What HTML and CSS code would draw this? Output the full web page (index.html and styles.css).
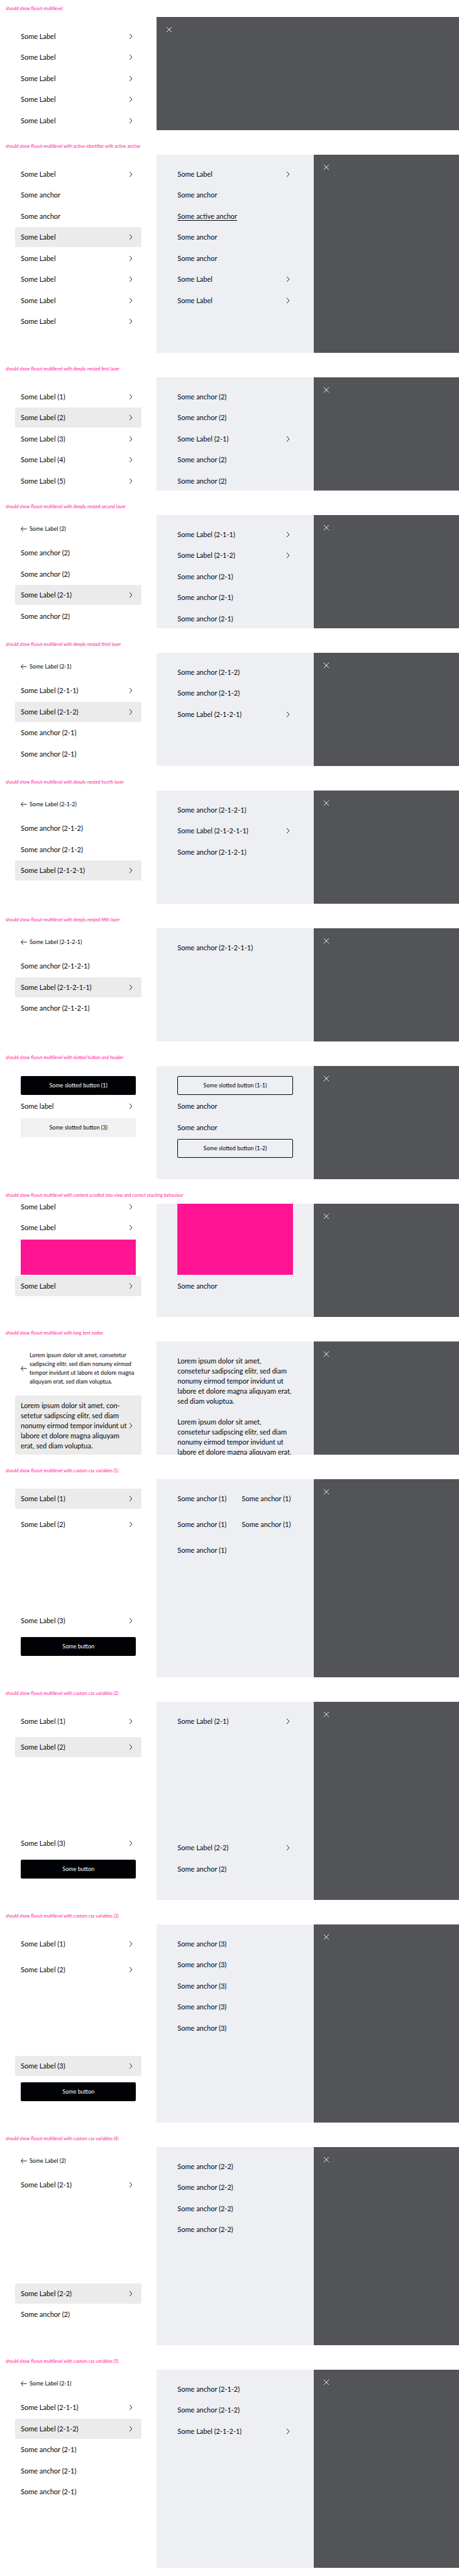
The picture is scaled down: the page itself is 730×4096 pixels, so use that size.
FILE: index.html
```html
<!DOCTYPE html>
<html lang="en">
<head>
<meta charset="utf-8">
<meta name="viewport" content="width=device-width, initial-scale=1">
<title>flyout-multilevel</title>
<link rel="stylesheet" href="styles.css">
</head>
<body>
<svg class="sprite" aria-hidden="true">
  <symbol id="next" viewBox="0 0 24 24"><path d="M7 5l6.5 7L7 19"/></symbol>
  <symbol id="back" viewBox="0 0 24 24"><path d="M6.5 5.5L1 12l5.500 6.500M1 12h15.500"/></symbol>
  <symbol id="close" viewBox="0 0 24 24"><path d="M5 5l14 14M19 5L5 19"/></symbol>
</svg>
<main>

<section class="story">
  <h2 class="title">should show flyout-multilevel</h2>
  <div class="flyout">
    <nav class="panel"><ul class="list">
      <li><button class="item">Some Label<svg class="icon"><use href="#next"/></svg></button></li>
      <li><button class="item">Some Label<svg class="icon"><use href="#next"/></svg></button></li>
      <li><button class="item">Some Label<svg class="icon"><use href="#next"/></svg></button></li>
      <li><button class="item">Some Label<svg class="icon"><use href="#next"/></svg></button></li>
      <li><button class="item">Some Label<svg class="icon"><use href="#next"/></svg></button></li>
    </ul></nav>
    <div class="backdrop backdrop--wide"><button class="close" aria-label="Close"><svg class="icon"><use href="#close"/></svg></button></div>
  </div>
</section>

<section class="story">
  <h2 class="title">should show flyout-multilevel with active-identifier with active anchor</h2>
  <div class="flyout flyout--tall">
    <nav class="panel"><ul class="list">
      <li><button class="item">Some Label<svg class="icon"><use href="#next"/></svg></button></li>
      <li><a class="item" href="#">Some anchor</a></li>
      <li><a class="item" href="#">Some anchor</a></li>
      <li><button class="item item--open">Some Label<svg class="icon"><use href="#next"/></svg></button></li>
      <li><button class="item">Some Label<svg class="icon"><use href="#next"/></svg></button></li>
      <li><button class="item">Some Label<svg class="icon"><use href="#next"/></svg></button></li>
      <li><button class="item">Some Label<svg class="icon"><use href="#next"/></svg></button></li>
      <li><button class="item">Some Label<svg class="icon"><use href="#next"/></svg></button></li>
    </ul></nav>
    <nav class="panel panel--sub"><ul class="list">
      <li><button class="item">Some Label<svg class="icon"><use href="#next"/></svg></button></li>
      <li><a class="item" href="#">Some anchor</a></li>
      <li><a class="item item--current" href="#" aria-current="page">Some active anchor</a></li>
      <li><a class="item" href="#">Some anchor</a></li>
      <li><a class="item" href="#">Some anchor</a></li>
      <li><button class="item">Some Label<svg class="icon"><use href="#next"/></svg></button></li>
      <li><button class="item">Some Label<svg class="icon"><use href="#next"/></svg></button></li>
    </ul></nav>
    <div class="backdrop"><button class="close" aria-label="Close"><svg class="icon"><use href="#close"/></svg></button></div>
  </div>
</section>

<section class="story">
  <h2 class="title">should show flyout-multilevel with deeply nested first layer</h2>
  <div class="flyout">
    <nav class="panel"><ul class="list">
      <li><button class="item">Some Label (1)<svg class="icon"><use href="#next"/></svg></button></li>
      <li><button class="item item--open">Some Label (2)<svg class="icon"><use href="#next"/></svg></button></li>
      <li><button class="item">Some Label (3)<svg class="icon"><use href="#next"/></svg></button></li>
      <li><button class="item">Some Label (4)<svg class="icon"><use href="#next"/></svg></button></li>
      <li><button class="item">Some Label (5)<svg class="icon"><use href="#next"/></svg></button></li>
    </ul></nav>
    <nav class="panel panel--sub"><ul class="list">
      <li><a class="item" href="#">Some anchor (2)</a></li>
      <li><a class="item" href="#">Some anchor (2)</a></li>
      <li><button class="item">Some Label (2-1)<svg class="icon"><use href="#next"/></svg></button></li>
      <li><a class="item" href="#">Some anchor (2)</a></li>
      <li><a class="item" href="#">Some anchor (2)</a></li>
    </ul></nav>
    <div class="backdrop"><button class="close" aria-label="Close"><svg class="icon"><use href="#close"/></svg></button></div>
  </div>
</section>

<section class="story">
  <h2 class="title">should show flyout-multilevel with deeply nested second layer</h2>
  <div class="flyout">
    <nav class="panel"><ul class="list">
      <li><button class="back"><svg class="icon"><use href="#back"/></svg>Some Label (2)</button></li>
      <li><a class="item" href="#">Some anchor (2)</a></li>
      <li><a class="item" href="#">Some anchor (2)</a></li>
      <li><button class="item item--open">Some Label (2-1)<svg class="icon"><use href="#next"/></svg></button></li>
      <li><a class="item" href="#">Some anchor (2)</a></li>
    </ul></nav>
    <nav class="panel panel--sub"><ul class="list">
      <li><button class="item">Some Label (2-1-1)<svg class="icon"><use href="#next"/></svg></button></li>
      <li><button class="item">Some Label (2-1-2)<svg class="icon"><use href="#next"/></svg></button></li>
      <li><a class="item" href="#">Some anchor (2-1)</a></li>
      <li><a class="item" href="#">Some anchor (2-1)</a></li>
      <li><a class="item" href="#">Some anchor (2-1)</a></li>
    </ul></nav>
    <div class="backdrop"><button class="close" aria-label="Close"><svg class="icon"><use href="#close"/></svg></button></div>
  </div>
</section>

<section class="story">
  <h2 class="title">should show flyout-multilevel with deeply nested third layer</h2>
  <div class="flyout">
    <nav class="panel"><ul class="list">
      <li><button class="back"><svg class="icon"><use href="#back"/></svg>Some Label (2-1)</button></li>
      <li><button class="item">Some Label (2-1-1)<svg class="icon"><use href="#next"/></svg></button></li>
      <li><button class="item item--open">Some Label (2-1-2)<svg class="icon"><use href="#next"/></svg></button></li>
      <li><a class="item" href="#">Some anchor (2-1)</a></li>
      <li><a class="item" href="#">Some anchor (2-1)</a></li>
    </ul></nav>
    <nav class="panel panel--sub"><ul class="list">
      <li><a class="item" href="#">Some anchor (2-1-2)</a></li>
      <li><a class="item" href="#">Some anchor (2-1-2)</a></li>
      <li><button class="item">Some Label (2-1-2-1)<svg class="icon"><use href="#next"/></svg></button></li>
    </ul></nav>
    <div class="backdrop"><button class="close" aria-label="Close"><svg class="icon"><use href="#close"/></svg></button></div>
  </div>
</section>

<section class="story">
  <h2 class="title">should show flyout-multilevel with deeply nested fourth layer</h2>
  <div class="flyout">
    <nav class="panel"><ul class="list">
      <li><button class="back"><svg class="icon"><use href="#back"/></svg>Some Label (2-1-2)</button></li>
      <li><a class="item" href="#">Some anchor (2-1-2)</a></li>
      <li><a class="item" href="#">Some anchor (2-1-2)</a></li>
      <li><button class="item item--open">Some Label (2-1-2-1)<svg class="icon"><use href="#next"/></svg></button></li>
    </ul></nav>
    <nav class="panel panel--sub"><ul class="list">
      <li><a class="item" href="#">Some anchor (2-1-2-1)</a></li>
      <li><button class="item">Some Label (2-1-2-1-1)<svg class="icon"><use href="#next"/></svg></button></li>
      <li><a class="item" href="#">Some anchor (2-1-2-1)</a></li>
    </ul></nav>
    <div class="backdrop"><button class="close" aria-label="Close"><svg class="icon"><use href="#close"/></svg></button></div>
  </div>
</section>

<section class="story">
  <h2 class="title">should show flyout-multilevel with deeply nested fifth layer</h2>
  <div class="flyout">
    <nav class="panel"><ul class="list">
      <li><button class="back"><svg class="icon"><use href="#back"/></svg>Some Label (2-1-2-1)</button></li>
      <li><a class="item" href="#">Some anchor (2-1-2-1)</a></li>
      <li><button class="item item--open">Some Label (2-1-2-1-1)<svg class="icon"><use href="#next"/></svg></button></li>
      <li><a class="item" href="#">Some anchor (2-1-2-1)</a></li>
    </ul></nav>
    <nav class="panel panel--sub"><ul class="list">
      <li><a class="item" href="#">Some anchor (2-1-2-1-1)</a></li>
    </ul></nav>
    <div class="backdrop"><button class="close" aria-label="Close"><svg class="icon"><use href="#close"/></svg></button></div>
  </div>
</section>

<section class="story">
  <h2 class="title">should show flyout-multilevel with slotted button and header</h2>
  <div class="flyout">
    <nav class="panel"><ul class="list">
      <li class="slot"><button class="button">Some slotted button (1)</button></li>
      <li><button class="item">Some label<svg class="icon"><use href="#next"/></svg></button></li>
      <li class="slot"><button class="button button--soft">Some slotted button (3)</button></li>
    </ul></nav>
    <nav class="panel panel--sub"><ul class="list">
      <li class="slot"><button class="button button--outline">Some slotted button (1-1)</button></li>
      <li><a class="item" href="#">Some anchor</a></li>
      <li><a class="item" href="#">Some anchor</a></li>
      <li class="slot"><button class="button button--outline">Some slotted button (1-2)</button></li>
    </ul></nav>
    <div class="backdrop"><button class="close" aria-label="Close"><svg class="icon"><use href="#close"/></svg></button></div>
  </div>
</section>

<section class="story">
  <h2 class="title">should show flyout-multilevel with content scrolled into view and correct stacking behaviour</h2>
  <div class="flyout">
    <nav class="panel"><ul class="list list--scrolled">
      <li><button class="item">Some Label<svg class="icon"><use href="#next"/></svg></button></li>
      <li><button class="item">Some Label<svg class="icon"><use href="#next"/></svg></button></li>
      <li class="slot"><div class="block"></div></li>
      <li><button class="item item--open">Some Label<svg class="icon"><use href="#next"/></svg></button></li>
    </ul></nav>
    <nav class="panel panel--sub"><ul class="list list--scrolled">
      <li class="slot"><div class="block block--tall"></div></li>
      <li><a class="item" href="#">Some anchor</a></li>
    </ul></nav>
    <div class="backdrop"><button class="close" aria-label="Close"><svg class="icon"><use href="#close"/></svg></button></div>
  </div>
</section>

<section class="story">
  <h2 class="title">should show flyout-multilevel with long text nodes</h2>
  <div class="flyout">
    <nav class="panel"><ul class="list">
      <li><button class="back"><svg class="icon"><use href="#back"/></svg>Lorem ipsum dolor sit amet, consetetur sadipscing elitr, sed diam nonumy eirmod tempor invidunt ut labore et dolore magna aliquyam erat, sed diam voluptua.</button></li>
      <li><button class="item item--open">Lorem ipsum dolor sit amet, con&shy;setetur sadipscing elitr, sed diam nonumy eirmod tempor invidunt ut labore et dolore magna aliquyam erat, sed diam voluptua.<svg class="icon"><use href="#next"/></svg></button></li>
    </ul></nav>
    <nav class="panel panel--sub"><ul class="list">
      <li><a class="item" href="#">Lorem ipsum dolor sit amet, consetetur sadipscing elitr, sed diam nonumy eirmod tempor invidunt ut labore et dolore magna aliquyam erat, sed diam voluptua.</a></li>
      <li><a class="item" href="#">Lorem ipsum dolor sit amet, consetetur sadipscing elitr, sed diam nonumy eirmod tempor invidunt ut labore et dolore magna aliquyam erat, sed diam voluptua.</a></li>
    </ul></nav>
    <div class="backdrop"><button class="close" aria-label="Close"><svg class="icon"><use href="#close"/></svg></button></div>
  </div>
</section>

<section class="story">
  <h2 class="title">should show flyout-multilevel with custom css variables (1)</h2>
  <div class="flyout flyout--tall">
    <nav class="panel"><ul class="list list--spaced">
      <li><button class="item item--open">Some Label (1)<svg class="icon"><use href="#next"/></svg></button></li>
      <li><button class="item">Some Label (2)<svg class="icon"><use href="#next"/></svg></button></li>
      <li class="push"><button class="item">Some Label (3)<svg class="icon"><use href="#next"/></svg></button></li>
      <li class="slot"><button class="button">Some button</button></li>
    </ul></nav>
    <nav class="panel panel--sub"><ul class="list list--columns">
      <li><a class="item" href="#">Some anchor (1)</a></li>
      <li><a class="item" href="#">Some anchor (1)</a></li>
      <li><a class="item" href="#">Some anchor (1)</a></li>
      <li><a class="item" href="#">Some anchor (1)</a></li>
      <li><a class="item" href="#">Some anchor (1)</a></li>
    </ul></nav>
    <div class="backdrop"><button class="close" aria-label="Close"><svg class="icon"><use href="#close"/></svg></button></div>
  </div>
</section>

<section class="story">
  <h2 class="title">should show flyout-multilevel with custom css variables (2)</h2>
  <div class="flyout flyout--tall">
    <nav class="panel"><ul class="list list--spaced">
      <li><button class="item">Some Label (1)<svg class="icon"><use href="#next"/></svg></button></li>
      <li><button class="item item--open">Some Label (2)<svg class="icon"><use href="#next"/></svg></button></li>
      <li class="push"><button class="item">Some Label (3)<svg class="icon"><use href="#next"/></svg></button></li>
      <li class="slot"><button class="button">Some button</button></li>
    </ul></nav>
    <nav class="panel panel--sub"><ul class="list">
      <li><button class="item">Some Label (2-1)<svg class="icon"><use href="#next"/></svg></button></li>
      <li class="push"><button class="item">Some Label (2-2)<svg class="icon"><use href="#next"/></svg></button></li>
      <li><a class="item" href="#">Some anchor (2)</a></li>
    </ul></nav>
    <div class="backdrop"><button class="close" aria-label="Close"><svg class="icon"><use href="#close"/></svg></button></div>
  </div>
</section>

<section class="story">
  <h2 class="title">should show flyout-multilevel with custom css variables (3)</h2>
  <div class="flyout flyout--tall">
    <nav class="panel"><ul class="list list--spaced">
      <li><button class="item">Some Label (1)<svg class="icon"><use href="#next"/></svg></button></li>
      <li><button class="item">Some Label (2)<svg class="icon"><use href="#next"/></svg></button></li>
      <li class="push"><button class="item item--open">Some Label (3)<svg class="icon"><use href="#next"/></svg></button></li>
      <li class="slot"><button class="button">Some button</button></li>
    </ul></nav>
    <nav class="panel panel--sub"><ul class="list">
      <li><a class="item" href="#">Some anchor (3)</a></li>
      <li><a class="item" href="#">Some anchor (3)</a></li>
      <li><a class="item" href="#">Some anchor (3)</a></li>
      <li><a class="item" href="#">Some anchor (3)</a></li>
      <li><a class="item" href="#">Some anchor (3)</a></li>
    </ul></nav>
    <div class="backdrop"><button class="close" aria-label="Close"><svg class="icon"><use href="#close"/></svg></button></div>
  </div>
</section>

<section class="story">
  <h2 class="title">should show flyout-multilevel with custom css variables (4)</h2>
  <div class="flyout flyout--tall">
    <nav class="panel"><ul class="list">
      <li><button class="back"><svg class="icon"><use href="#back"/></svg>Some Label (2)</button></li>
      <li><button class="item">Some Label (2-1)<svg class="icon"><use href="#next"/></svg></button></li>
      <li class="push"><button class="item item--open">Some Label (2-2)<svg class="icon"><use href="#next"/></svg></button></li>
      <li><a class="item" href="#">Some anchor (2)</a></li>
    </ul></nav>
    <nav class="panel panel--sub"><ul class="list">
      <li><a class="item" href="#">Some anchor (2-2)</a></li>
      <li><a class="item" href="#">Some anchor (2-2)</a></li>
      <li><a class="item" href="#">Some anchor (2-2)</a></li>
      <li><a class="item" href="#">Some anchor (2-2)</a></li>
    </ul></nav>
    <div class="backdrop"><button class="close" aria-label="Close"><svg class="icon"><use href="#close"/></svg></button></div>
  </div>
</section>

<section class="story">
  <h2 class="title">should show flyout-multilevel with custom css variables (5)</h2>
  <div class="flyout flyout--tall">
    <nav class="panel"><ul class="list">
      <li><button class="back"><svg class="icon"><use href="#back"/></svg>Some Label (2-1)</button></li>
      <li><button class="item">Some Label (2-1-1)<svg class="icon"><use href="#next"/></svg></button></li>
      <li><button class="item item--open">Some Label (2-1-2)<svg class="icon"><use href="#next"/></svg></button></li>
      <li><a class="item" href="#">Some anchor (2-1)</a></li>
      <li><a class="item" href="#">Some anchor (2-1)</a></li>
      <li><a class="item" href="#">Some anchor (2-1)</a></li>
    </ul></nav>
    <nav class="panel panel--sub"><ul class="list">
      <li><a class="item" href="#">Some anchor (2-1-2)</a></li>
      <li><a class="item" href="#">Some anchor (2-1-2)</a></li>
      <li><button class="item">Some Label (2-1-2-1)<svg class="icon"><use href="#next"/></svg></button></li>
    </ul></nav>
    <div class="backdrop"><button class="close" aria-label="Close"><svg class="icon"><use href="#close"/></svg></button></div>
  </div>
</section>

</main>
</body>
</html>
```
FILE: styles.css
```css
:root {
  --ink: #010205;
  --surface: #eeeff2;
  --shade: #535457;
  --open: #ebebeb;
  --pink: #ff1493;
}

* { box-sizing: border-box; }

body {
  margin: 0;
  background: #fff;
  color: var(--ink);
  font: 400 11px/16px Lato, "Liberation Sans", sans-serif;
}

button {
  border: 0;
  background: none;
  color: inherit;
  font: inherit;
  text-align: left;
}

.sprite { position: absolute; width: 0; height: 0; }

.icon {
  flex: none;
  width: 14px;
  height: 14px;
  fill: none;
  stroke: currentColor;
  stroke-width: 1.5;
}

.story { padding-bottom: 12px; }

.title {
  margin: 0;
  padding: 0 9px;
  color: var(--pink);
  font-size: 7px;
  font-weight: 400;
  line-height: 27px;
}

/* flyout: two navigation levels and the dimmed page behind them */
.flyout {
  display: grid;
  grid-template-columns: 111fr 111fr 103fr;
  height: 180px;
}

.flyout--tall { height: 315px; }

.panel {
  display: flex;
  flex-direction: column;
  min-height: 0;
  overflow: hidden;
  padding: 15px 24px 0;
}

.flyout--tall .panel { padding-bottom: 33px; }

.panel--sub { background: var(--surface); }

.backdrop { padding: 13px; background: var(--shade); }

.backdrop--wide { grid-column: span 2; }

.close {
  display: block;
  padding: 0;
  color: #fff;
}

.close .icon { display: block; }

.list {
  display: flex;
  flex: 1 0 auto;
  flex-direction: column;
  margin: 0;
  padding: 0;
  list-style: none;
}

.list > li { margin-bottom: 1px; }
.list > li:nth-child(even) { margin-bottom: 2px; }
.list > .push { margin-top: auto; }

.list--spaced > li,
.list--spaced > li:nth-child(even) { margin-bottom: 9px; }

.list > li:last-child { margin-bottom: 0; }

.list--columns {
  display: grid;
  grid-template-columns: 1fr 1fr;
  align-content: start;
  gap: 9px 3px;
}

.list--columns > li,
.list--columns > li:nth-child(even) { margin: 0; }

/* content moved up as after scrolling to the open entry */
.list--scrolled { margin-top: -26px; }

.item {
  display: flex;
  align-items: center;
  justify-content: space-between;
  width: 100%;
  padding: 8px 9px;
  border-radius: 2px;
  color: inherit;
  text-decoration: none;
}

.item--open { background: var(--open); }

.item--current {
  text-decoration: underline;
  text-underline-offset: 2px;
}

.back {
  display: flex;
  align-items: center;
  width: 100%;
  margin-bottom: 14px;
  padding: 0 9px;
  font-size: 9px;
  line-height: 14px;
}

.slot { padding: 1px 9px; }

.button {
  display: block;
  width: 100%;
  height: 30px;
  padding: 0;
  border-radius: 2px;
  background: var(--ink);
  color: #fff;
  font-size: 9px;
  text-align: center;
}

.button--soft { background: #f1f1f1; color: var(--ink); }

.button--outline {
  border: 1px solid var(--ink);
  background: none;
  color: var(--ink);
}

.block { height: 56px; background: var(--pink); }

.block--tall { height: 123px; }
```
